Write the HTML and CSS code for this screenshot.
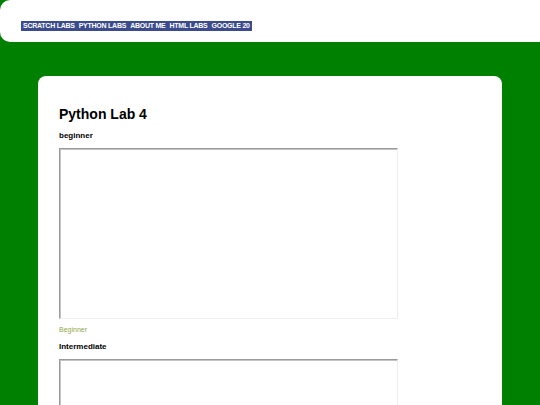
FILE: index.html
```html
<!DOCTYPE html>
<html>
<head>
<meta charset="utf-8">
<link rel="stylesheet" href="styles.css">
</head>
<body>
<header class="top">
  <nav class="nav">
    <a href="#">SCRATCH LABS</a>
    <a href="#">PYTHON LABS</a>
    <a href="#">ABOUT ME</a>
    <a href="#">HTML LABS</a>
    <a href="#">GOOGLE 20</a>
  </nav>
</header>
<main class="card">
  <h1 class="title">Python Lab 4</h1>
  <h2 class="label">beginner</h2>
  <div class="frame"></div>
  <p class="caption">Beginner</p>
  <h2 class="label">Intermediate</h2>
  <div class="frame"></div>
</main>
</body>
</html>
```
FILE: styles.css
```css
html, body {
  margin: 0;
  padding: 0;
}
body {
  background: #008000;
  font-family: "Liberation Sans", Arial, sans-serif;
  height: 405px;
  overflow: hidden;
}
.top {
  background: #fff;
  height: 42px;
  border-radius: 10px 0 0 10px;
  padding: 21px 0 0 21px;
  box-sizing: border-box;
}
.nav {
  display: flex;
  width: fit-content;
  background: #3c4b8c;
  padding: 0 2px;
  gap: 4px;
  height: 10px;
  align-items: center;
}
.nav a {
  color: #fff;
  font-weight: bold;
  font-size: 7px;
  letter-spacing: -0.25px;
  text-decoration: none;
  line-height: 10px;
}
.card {
  background: #fff;
  margin: 34px 38px 0 38px;
  border-radius: 8px;
  padding: 28px 21px 0 21px;
  height: 400px;
}
.title {
  margin: 0 0 6px 0;
  font-size: 14px;
  font-weight: bold;
  line-height: 20px;
  color: #000;
}
.label {
  margin: 0 0 7px 0;
  font-size: 8px;
  font-weight: bold;
  line-height: 11px;
  color: #000;
}
.frame {
  width: 339px;
  height: 171px;
  box-sizing: border-box;
  border: 1px solid;
  border-color: #9a9a9a #eeeeee #eeeeee #9a9a9a;
  box-shadow: inset 1px 1px 0 #c4c4c4;
}
.caption {
  margin: 6px 0 6px 0;
  font-size: 7px;
  line-height: 10px;
  color: #8fa84a;
}
```
